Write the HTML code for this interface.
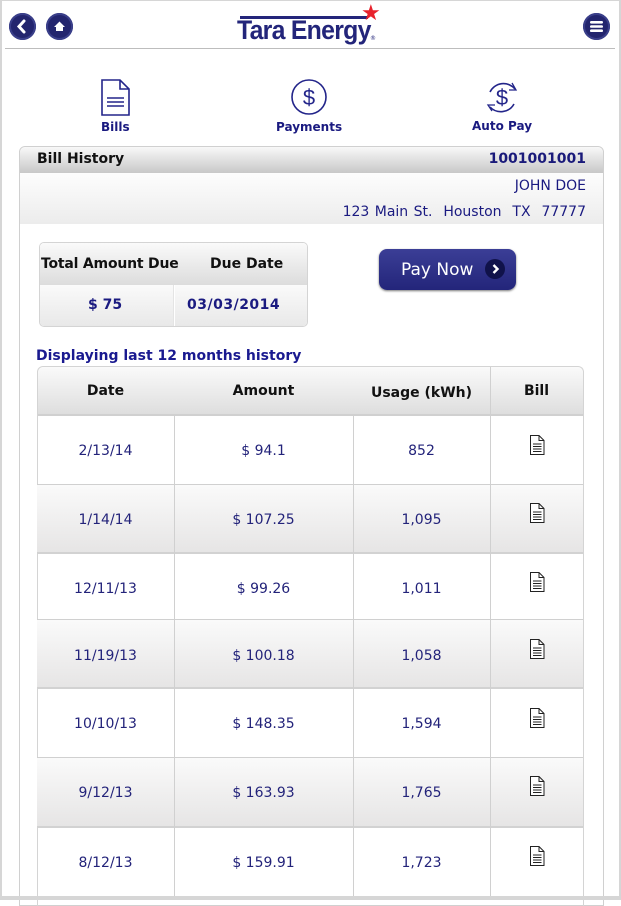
<!DOCTYPE html>
<html><head><style>
*{margin:0;padding:0;box-sizing:border-box}
body{width:621px;height:900px;position:relative;overflow:hidden;background:#fff;font-family:"DejaVu Sans","Liberation Sans",sans-serif;color:#1a1a80}
.a{position:absolute}
.frame{left:0;top:0;width:621px;height:900px;border-left:2px solid #d6d6d6;border-right:2px solid #d6d6d6;border-top:1px solid #d6d6d6}
.circ{width:27px;height:27px;border-radius:50%;background:#23256e;box-shadow:0 0 0 2px #3a3f8a inset;}
.b{font-weight:bold}
.cell{position:absolute;text-align:center;font-size:14px;color:#23237a}
.row{position:absolute;left:37px;width:546px;border-bottom:2px solid #d2d2d2}
.g{background:linear-gradient(#fafafa,#e6e5e5)}
.vl{position:absolute;width:1px;background:#d0d0d0}
</style></head><body>
<div class="a frame"></div>
<div class="a circ" style="left:9px;top:13px"><svg width="27" height="27"><path d="M15 8 L10 13.5 L15 19" stroke="#fff" stroke-width="3" fill="none" stroke-linecap="round"/></svg></div>
<div class="a circ" style="left:46px;top:13px"><svg width="27" height="27"><path d="M8 14 L13.5 8.5 L19 14 L17 14 L17 18 L10 18 L10 14Z" fill="#fff"/></svg></div>
<div class="a circ" style="left:583px;top:13px"><svg width="27" height="27"><rect x="7" y="8" width="13" height="2.6" rx="1.3" fill="#fff"/><rect x="7" y="12.2" width="13" height="2.6" rx="1.3" fill="#fff"/><rect x="7" y="16.4" width="13" height="2.6" rx="1.3" fill="#fff"/></svg></div>
<div class="a" style="left:240px;top:16px;width:128px;height:3px;background:#23257a"></div>
<div class="a b" style="left:237px;top:15px;font-family:'Liberation Sans',sans-serif;font-size:27px;color:#23257a;letter-spacing:-0.8px;transform:scaleX(0.92);transform-origin:left">Tara Energy</div>
<div class="a" style="left:361px;top:3px;color:#e8222c;font-size:22px;line-height:22px">★</div>
<div class="a" style="left:370px;top:35px;font-size:6px;color:#23257a">®</div>
<div class="a" style="left:5px;top:48px;width:610px;height:1px;background:#bdbdbd"></div>
<svg class="a" style="left:100px;top:78px" width="32" height="40"><path d="M2 2 H20 L29 11 V37 H2Z M20 2 V11 H29" fill="none" stroke="#23258a" stroke-width="1.6"/><path d="M7 20H24M7 24H24M7 28H24" stroke="#23258a" stroke-width="1.5"/></svg>
<div class="a b" style="left:101px;top:120px;font-size:12px">Bills</div>
<svg class="a" style="left:290px;top:79px" width="40" height="40"><ellipse cx="19" cy="18" rx="17" ry="17" fill="none" stroke="#23258a" stroke-width="1.6"/><text x="19" y="26" text-anchor="middle" font-size="22" fill="#23258a" font-family="Liberation Sans">$</text></svg>
<div class="a b" style="left:276px;top:120px;font-size:12px">Payments</div>
<svg class="a" style="left:482px;top:79px" width="40" height="40"><path d="M8 13 A15 15 0 0 1 33 10 M32 25 A15 15 0 0 1 8 28" fill="none" stroke="#23258a" stroke-width="1.6"/><path d="M30 4 L34 11 L27 11 M10 32 L6 26 L13 26" fill="none" stroke="#23258a" stroke-width="1.3"/><text x="20" y="26" text-anchor="middle" font-size="22" fill="#23258a" font-family="Liberation Sans">$</text></svg>
<div class="a b" style="left:472px;top:119px;font-size:12px">Auto Pay</div>
<div class="a" style="left:19px;top:146px;width:585px;height:760px;border:1px solid #d0d0d0;border-radius:6px 6px 0 0"></div>
<div class="a g" style="left:20px;top:147px;width:583px;height:26px;background:linear-gradient(#f8f8f8,#c8c8c8);border-radius:6px 6px 0 0"></div>
<div class="a b" style="left:37px;top:151px;font-size:14px;color:#111">Bill History</div>
<div class="a b" style="right:35px;top:151px;font-size:14px;color:#1a1a7a">1001001001</div>
<div class="a" style="left:20px;top:173px;width:583px;height:51px;background:linear-gradient(#fdfdfd,#ececec)"></div>
<div class="a" style="right:35px;top:178px;font-size:14px">JOHN DOE</div>
<div class="a" style="right:35px;top:204px;font-size:14px;word-spacing:1px">123 Main St. &nbsp;Houston &nbsp;TX &nbsp;77777</div>
<div class="a" style="left:39px;top:242px;width:269px;height:85px;border:1px solid #d4d4d4;border-radius:5px;overflow:hidden">
<div style="height:42px;background:linear-gradient(#fafafa,#dcdcdc)"></div>
<div style="position:absolute;left:0;top:42px;width:134px;height:42px;background:linear-gradient(#fafafa,#e8e8e8);border-right:1px solid #e4e4e4"></div>
<div style="position:absolute;left:135px;top:42px;width:134px;height:42px;background:linear-gradient(#fafafa,#e8e8e8)"></div>
</div>
<div class="a b" style="left:41px;top:256px;font-size:14px;color:#111;letter-spacing:-0.2px">Total Amount Due</div>
<div class="a b" style="left:210px;top:256px;font-size:14px;color:#111">Due Date</div>
<div class="a b" style="left:88px;top:297px;font-size:14px">$ 75</div>
<div class="a b" style="left:187px;top:297px;font-size:14px;letter-spacing:0.5px">03/03/2014</div>
<div class="a" style="left:379px;top:249px;width:137px;height:41px;border-radius:8px;background:linear-gradient(#3b3e96,#23257a);box-shadow:0 1px 2px #777"></div>
<div class="a" style="left:401px;top:260px;font-size:17px;color:#fff">Pay Now</div>
<div class="a" style="left:485px;top:259px;width:20px;height:20px;border-radius:50%;background:#10124a"><svg width="20" height="20"><path d="M8.5 6 L12.5 10 L8.5 14" stroke="#fff" stroke-width="2.4" fill="none"/></svg></div>
<div class="a b" style="left:36px;top:348px;font-size:14px;color:#1a1a90">Displaying last 12 months history</div>
<div class="a" style="left:37px;top:366px;width:547px;height:540px;border:1px solid #d4d4d4;border-radius:6px 6px 0 0;border-bottom:none"></div>
<div class="a" style="left:38px;top:367px;width:545px;height:49px;background:linear-gradient(#fafafa,#dedede);border-radius:6px 6px 0 0;border-bottom:2px solid #d0d0d0"></div>
<div class="a g row" style="top:485px;height:69px"></div>
<div class="a g row" style="top:620px;height:69px"></div>
<div class="a g row" style="top:758px;height:70px"></div>
<div class="a" style="left:37px;top:484px;width:546px;height:1px;background:#d0d0d0"></div>
<div class="a" style="left:37px;top:619px;width:546px;height:1px;background:#d0d0d0"></div>
<div class="a" style="left:37px;top:757px;width:546px;height:1px;background:#d0d0d0"></div>
<div class="vl" style="left:174px;top:416px;height:480px"></div>
<div class="vl" style="left:353px;top:416px;height:480px"></div>
<div class="vl" style="left:490px;top:367px;height:529px"></div>
<div class="cell b" style="left:37px;width:137px;top:383px;color:#111">Date</div>
<div class="cell b" style="left:174px;width:179px;top:383px;color:#111">Amount</div>
<div class="cell b" style="left:353px;width:137px;top:385px;color:#111">Usage (kWh)</div>
<div class="cell b" style="left:490px;width:93px;top:383px;color:#111">Bill</div>

<div class="cell" style="left:37px;width:137px;top:443px">2/13/14</div><div class="cell" style="left:174px;width:179px;top:443px">$ 94.1</div><div class="cell" style="left:353px;width:137px;top:443px">852</div>
<div class="cell" style="left:37px;width:137px;top:512px">1/14/14</div><div class="cell" style="left:174px;width:179px;top:512px">$ 107.25</div><div class="cell" style="left:353px;width:137px;top:512px">1,095</div>
<div class="cell" style="left:37px;width:137px;top:581px">12/11/13</div><div class="cell" style="left:174px;width:179px;top:581px">$ 99.26</div><div class="cell" style="left:353px;width:137px;top:581px">1,011</div>
<div class="cell" style="left:37px;width:137px;top:648px">11/19/13</div><div class="cell" style="left:174px;width:179px;top:648px">$ 100.18</div><div class="cell" style="left:353px;width:137px;top:648px">1,058</div>
<div class="cell" style="left:37px;width:137px;top:716px">10/10/13</div><div class="cell" style="left:174px;width:179px;top:716px">$ 148.35</div><div class="cell" style="left:353px;width:137px;top:716px">1,594</div>
<div class="cell" style="left:37px;width:137px;top:785px">9/12/13</div><div class="cell" style="left:174px;width:179px;top:785px">$ 163.93</div><div class="cell" style="left:353px;width:137px;top:785px">1,765</div>
<div class="cell" style="left:37px;width:137px;top:855px">8/12/13</div><div class="cell" style="left:174px;width:179px;top:855px">$ 159.91</div><div class="cell" style="left:353px;width:137px;top:855px">1,723</div>

<svg class="a" width="0" height="0"><defs><symbol id="doc" viewBox="0 0 16 20"><path d="M1.5 0.5H10L15 5.5V19.5H1.5Z M10 0.5V5.5H15" fill="#fff" stroke="#222" stroke-width="1"/><path d="M4 9H12.5M4 11.5H12.5M4 14H12.5M4 16.5H12.5" stroke="#222" stroke-width="0.9"/></symbol></defs></svg>
<svg class="a" style="left:529px;top:435px" width="16" height="20"><use href="#doc"/></svg>
<svg class="a" style="left:529px;top:503px" width="16" height="20"><use href="#doc"/></svg>
<svg class="a" style="left:529px;top:572px" width="16" height="20"><use href="#doc"/></svg>
<svg class="a" style="left:529px;top:639px" width="16" height="20"><use href="#doc"/></svg>
<svg class="a" style="left:529px;top:708px" width="16" height="20"><use href="#doc"/></svg>
<svg class="a" style="left:529px;top:776px" width="16" height="20"><use href="#doc"/></svg>
<svg class="a" style="left:529px;top:846px" width="16" height="20"><use href="#doc"/></svg>
<div class="a" style="left:0;top:896px;width:621px;height:4px;background:#d6d6d6"></div>
</body></html>
